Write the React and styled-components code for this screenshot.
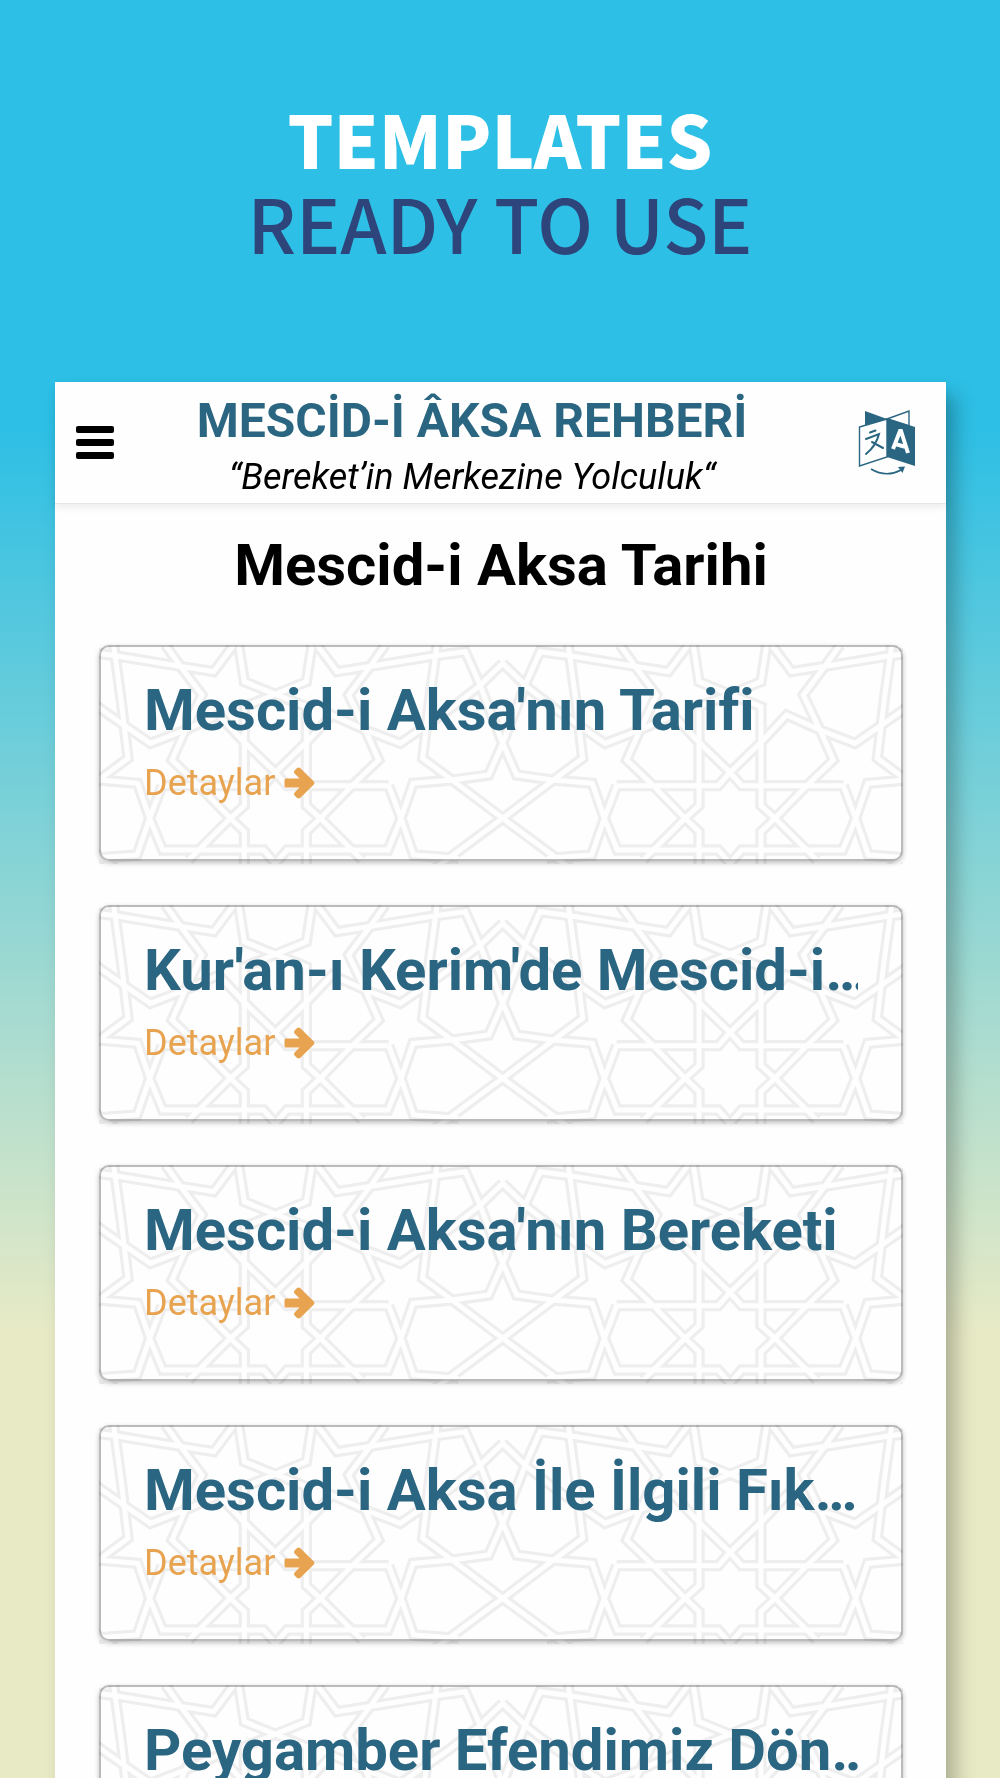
import styled, { createGlobalStyle } from "styled-components";

const topics = [
    "Mescid-i Aksa'nın Tarifi",
    "Kur'an-ı Kerim'de Mescid-i…",
    "Mescid-i Aksa'nın Bereketi",
    "Mescid-i Aksa İle İlgili Fık…",
    "Peygamber Efendimiz Dön…",
];

// one half of the geometric motif, mirrored around its axis
const ribbons = [
    "M340 422 H35 L0 382",
    "M0 382 L95 290 L170 210 L270 255 L375 295 L520 195 L610 125 L682 55",
    "M110 0 L93 110 L0 148 L93 185 V482 L135 520 L230 615 L260 645",
    "M330 0 L280 70 L220 150 L270 255 L310 345 L230 422 L135 520 L93 560 V670",
    "M682 295 L640 390 L530 405 L413 415 L377 520 L338 615 H35 L0 655",
    "M340 422 L377 520 L415 630 L550 640",
    "M485 0 L462 170 L442 340 L530 405 L682 520 L520 640 L480 670",
    "M682 295 L610 110 L570 20 L480 32 L310 60 L185 80 L125 0",
].join(" ");

function Motif({ color, width }) {
    return (
        <g fill="none" stroke={color} strokeWidth={width}>
            {[529, 1893].map((axis) => (
                <g key={axis} transform={`translate(${axis} 0)`}>
                    <path d={ribbons} />
                    <path d={ribbons} transform="scale(-1 1)" />
                </g>
            ))}
        </g>
    );
}

function TranslateIcon() {
    return (
        <svg width="58" height="68" viewBox="0 0 58 68" fill="none" aria-hidden="true">
            <path d="M7 2 L29 10 L7 17 Z" fill="#2a6681" />
            <path d="M29 10 L51 2 V17 L29 10 Z" stroke="#2a6681" strokeWidth="1.4" />
            <path d="M1.5 18 L29 10 V48 L1.5 57 Z" fill="#fff" stroke="#2a6681" strokeWidth="1.4" />
            <path d="M29 9 L57 18 V57 L29 48 Z" fill="#2a6681" />
            <path d="M12 23.5 L17.5 21.5 M8 30 L21 25 Q18 37 8 45 M14 33 L25 39" stroke="#2a6681" strokeWidth="2" strokeLinecap="round" />
            <path d="M35 40 L42 22 H43 L50 44 M37 35 L48 38" stroke="#fff" strokeWidth="4" />
            <path d="M13 60 Q28 69 43 61" stroke="#2a6681" strokeWidth="1.6" />
            <path d="M40 58 L47 57.5 L44.5 64 Z" fill="#2a6681" />
        </svg>
    );
}

function ArrowIcon() {
    return (
        <svg width="31" height="32" viewBox="0 0 31 32" fill="currentColor" aria-hidden="true">
            <path d="M2 11.500 H15.500 L10.800 6.800 Q9.200 5 10.800 3.200 L12.800 1.200 Q14.600 -0.300 16.400 1.200 L29.600 14.200 Q31.200 16 29.600 17.800 L16.400 30.800 Q14.600 32.300 12.800 30.800 L10.800 28.800 Q9.200 27 10.800 25.200 L15.500 20.500 H2 Q0.500 20.500 0.500 19 V13 Q0.500 11.500 2 11.500 Z" />
        </svg>
    );
}

export default function App() {
    return (
        <>
            <GlobalStyle />
            <Page>
                <Headline>
                    <strong>TEMPLATES</strong>
                    <span>READY TO USE</span>
                </Headline>

                <Sheet>
                    <TopBar>
                        <MenuButton aria-label="Menü">
                            <i />
                            <i />
                            <i />
                        </MenuButton>
                        <Brand>
                            <BrandName>MESCİD-İ ÂKSA REHBERİ</BrandName>
                            <Slogan>“Bereket’in Merkezine Yolculuk“</Slogan>
                        </Brand>
                        <IconButton aria-label="Dil">
                            <TranslateIcon />
                        </IconButton>
                    </TopBar>

                    <Content>
                        <PageTitle>Mescid-i Aksa Tarihi</PageTitle>
                        <CardList>
                            {topics.map((topic) => (
                                <Card key={topic}>
                                    <Pattern viewBox="0 0 2412 657" preserveAspectRatio="xMidYMin slice" aria-hidden="true">
                                        <Motif color="#efefef" width={34} />
                                        <Motif color="#ffffff" width={15} />
                                    </Pattern>
                                    <CardTitle>{topic}</CardTitle>
                                    <Details href="#">
                                        Detaylar <ArrowIcon />
                                    </Details>
                                </Card>
                            ))}
                        </CardList>
                    </Content>
                </Sheet>
            </Page>
        </>
    );
}

const GlobalStyle = createGlobalStyle`
    * {
        box-sizing: border-box;
    }

    body {
        margin: 0;
        font-family: Roboto, "Liberation Sans", sans-serif;
    }

    h1, h2, p {
        margin: 0;
    }
`;

const Page = styled.main`
    height: 100vh;
    overflow: hidden;
    display: flex;
    flex-direction: column;
    background: linear-gradient(#2dbfe5 24%, #e8eac5 75%);
`;

const Headline = styled.header`
    display: flex;
    flex-direction: column;
    align-items: center;
    padding: 96px 0 118px;
    font-family: "Noto Sans CJK JP", "Open Sans", sans-serif;
    font-size: 74px;
    font-weight: 500;
    line-height: 84px;
    color: #2e457b;

    strong {
        font-size: 72px;
        font-weight: 900;
        color: #fff;
    }
`;

const Sheet = styled.section`
    flex: 1 0 auto;
    margin: 0 54px 0 55px;
    background: #fefefe;
    box-shadow: 10px 14px 18px rgba(0, 0, 0, 0.25);
`;

const TopBar = styled.div`
    display: flex;
    align-items: center;
    height: 122px;
    padding: 0 30px 0 21px;
    border-bottom: 1px solid #e6e6e6;
    box-shadow: 0 3px 8px rgba(0, 0, 0, 0.08);
`;

const MenuButton = styled.button`
    display: flex;
    flex-direction: column;
    gap: 6px;
    width: 38px;
    padding: 0;
    border: 0;
    background: none;

    i {
        height: 7px;
        border-radius: 2px;
        background: #000;
    }
`;

const IconButton = styled.button`
    display: flex;
    padding: 0;
    border: 0;
    background: none;
`;

const Brand = styled.div`
    flex: 1;
    padding: 8px 28px 0 0;
    text-align: center;
    white-space: nowrap;
`;

const BrandName = styled.p`
    font-size: 48px;
    font-weight: 700;
    line-height: 60px;
    color: #2a6681;
`;

const Slogan = styled.p`
    font-size: 36px;
    font-style: italic;
    line-height: 52px;
    color: #000;
`;

const Content = styled.div`
    padding: 27px 43px 0 44px;
`;

const PageTitle = styled.h1`
    font-size: 58px;
    font-weight: 700;
    line-height: 68px;
    text-align: center;
    color: #000;
`;

const CardList = styled.div`
    display: flex;
    flex-direction: column;
    gap: 44px;
    padding-top: 46px;
`;

const Card = styled.article`
    position: relative;
    height: 216px;
    padding: 28px 43px;
    border: 2px solid #bdbbb9;
    border-radius: 10px;
    box-shadow: 0 2px 5px rgba(0, 0, 0, 0.25);
`;

const Pattern = styled.svg`
    position: absolute;
    inset: -2px;
    width: calc(100% + 4px);
    height: 219px;
    mix-blend-mode: multiply;
`;

const CardTitle = styled.h2`
    position: relative;
    overflow: hidden;
    white-space: nowrap;
    font-size: 58px;
    font-weight: 700;
    font-variant-ligatures: none;
    line-height: 70px;
    color: #2a6681;
`;

const Details = styled.a`
    position: relative;
    display: inline-flex;
    align-items: center;
    gap: 9px;
    margin-top: 13px;
    font-size: 36px;
    line-height: 50px;
    color: #e7a350;
    text-decoration: none;
`;
